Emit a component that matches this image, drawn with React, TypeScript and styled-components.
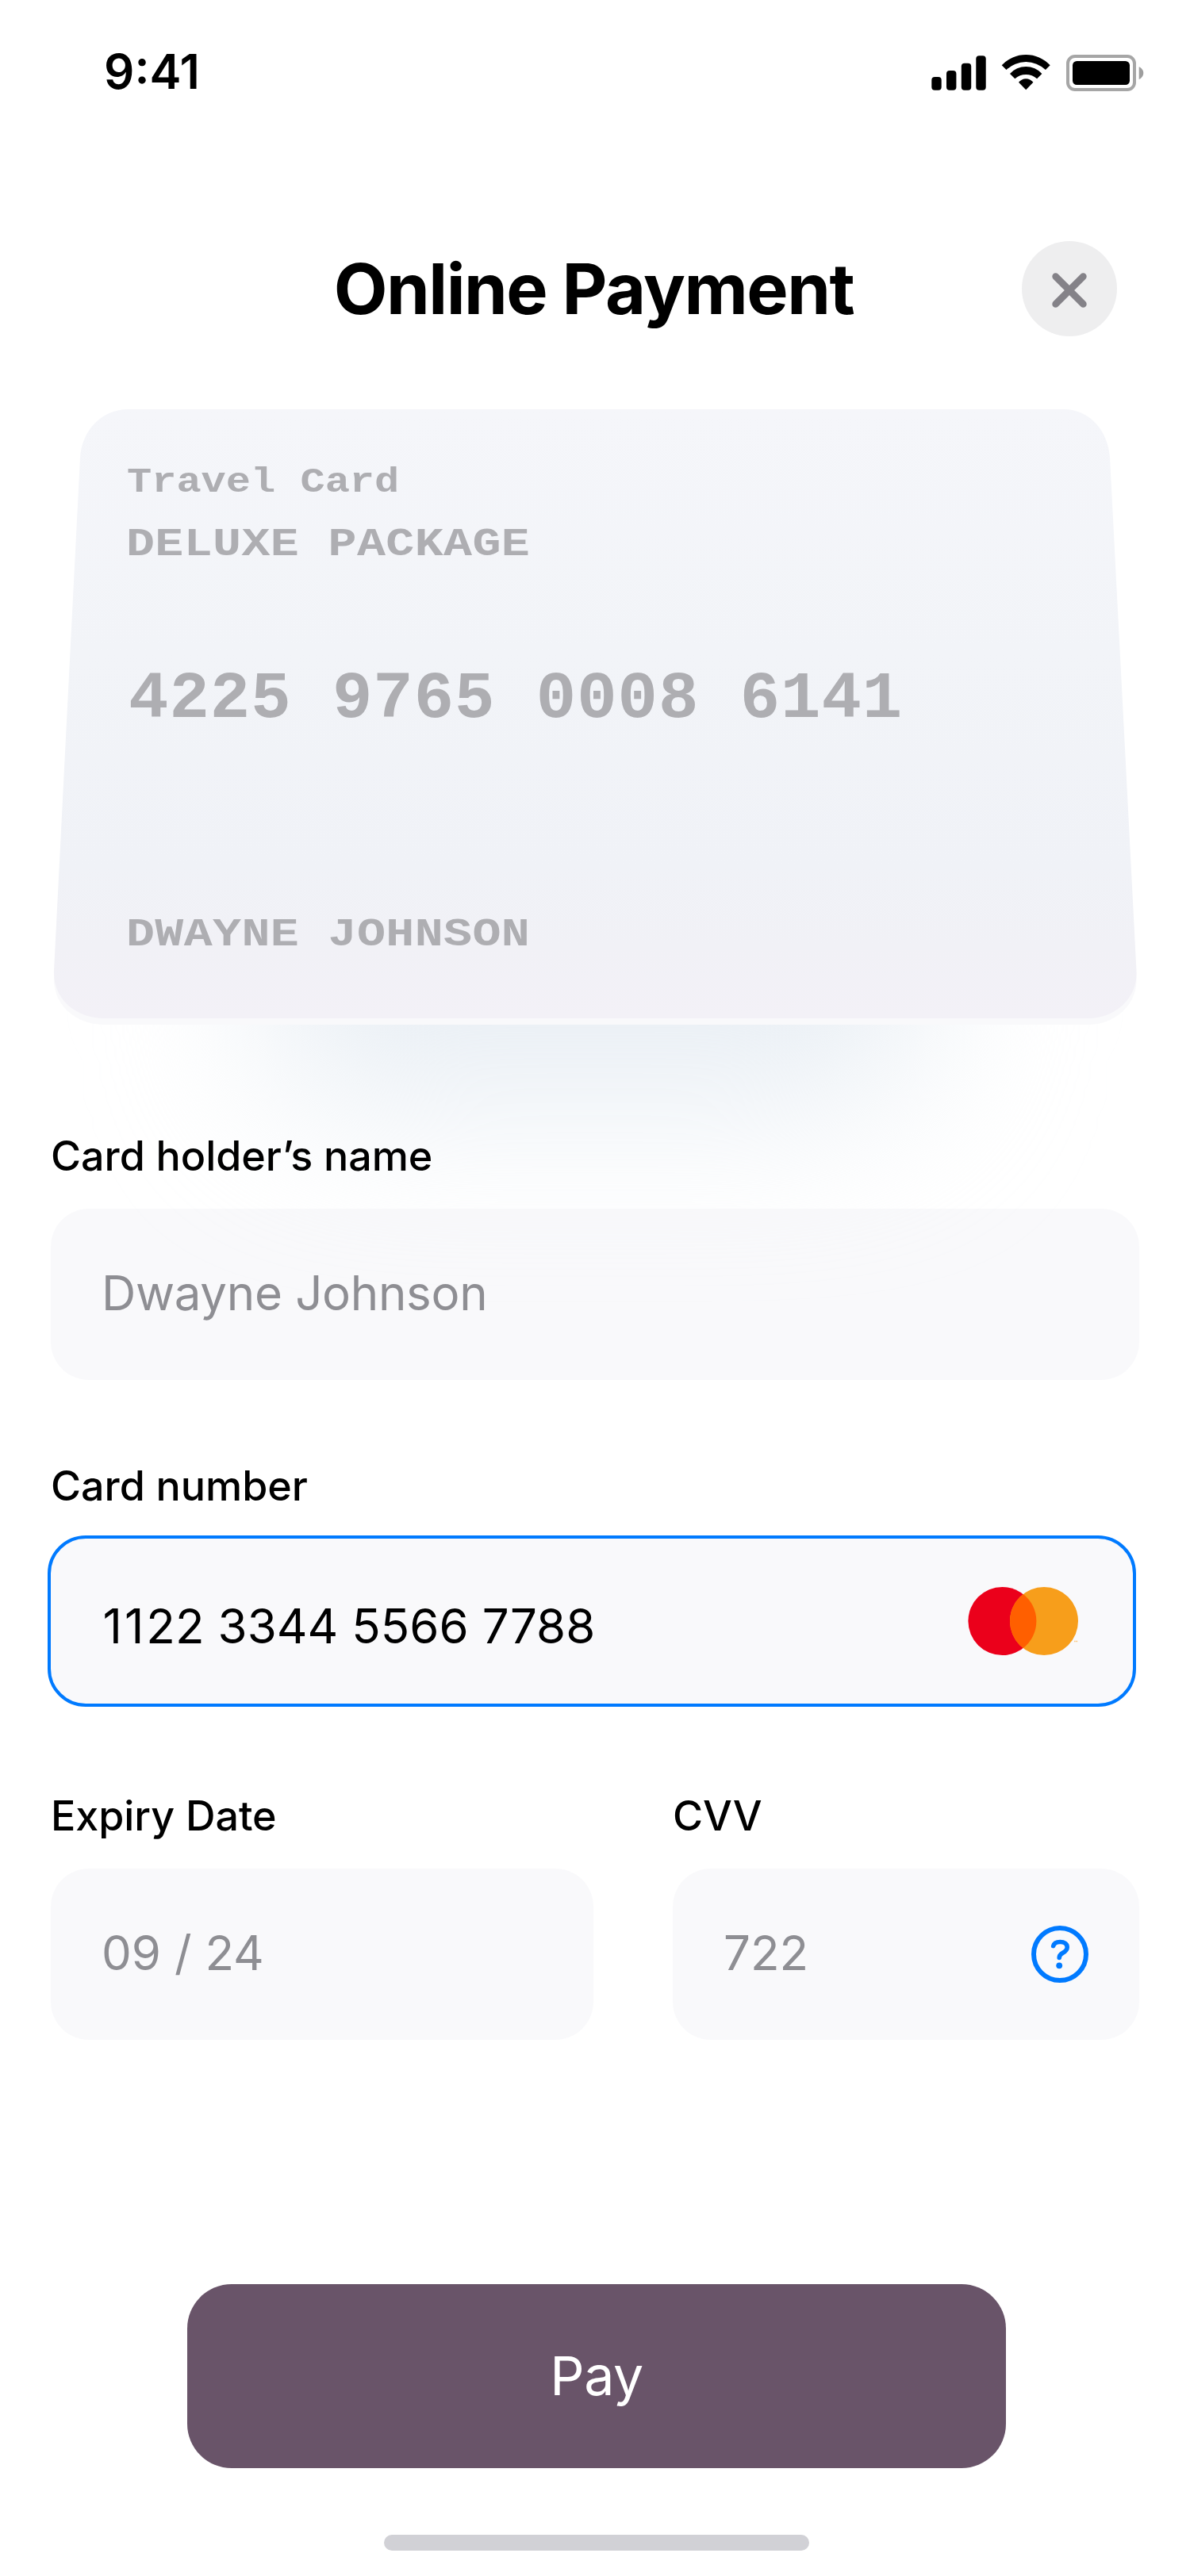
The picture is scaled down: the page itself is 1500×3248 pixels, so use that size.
import React from "react";
import styled, { createGlobalStyle, css } from "styled-components";

const sans = `Inter, "Liberation Sans", sans-serif`;
const mono = `"Liberation Mono", monospace`;

const GlobalStyle = createGlobalStyle`
  *, *::before, *::after { box-sizing: border-box; }
  body { margin: 0; background: #fff; }
`;

const Screen = styled.main`
  position: relative;
  display: flex;
  flex-direction: column;
  width: 1500px;
  height: 3248px;
  overflow: hidden;
  background: #fff;
  color: #000;
  font-family: ${sans};
`;

const StatusBar = styled.div`
  display: flex;
  justify-content: space-between;
  align-items: flex-start;
  height: 176px;
  padding: 54px 58px 0 131px;
`;

const Time = styled.span`
  font-size: 60px;
  line-height: 72px;
  font-weight: 600;
`;

const StatusIcons = styled.div`
  display: flex;
  padding-top: 14px;
  gap: 20px;

  svg {
    display: block;
    overflow: visible;
  }
`;

const Header = styled.header`
  display: grid;
  grid-template-columns: 1fr auto 1fr;
  align-items: center;
  height: 120px;
  margin-top: 128px;
  padding: 0 92px;
`;

const Title = styled.h1`
  grid-column: 2;
  margin: 0;
  padding-right: 3px;
  font-size: 88px;
  line-height: 120px;
  font-weight: 700;
  letter-spacing: -1.5px;
`;

const CloseButton = styled.button`
  justify-self: end;
  display: flex;
  align-items: center;
  justify-content: center;
  width: 120px;
  height: 120px;
  padding: 3px 0 0;
  border: 0;
  border-radius: 50%;
  background: #eeeeef;
`;

const CardStage = styled.section`
  position: relative;
  height: 776px;
  margin: 92px 64px 0;
`;

const CardGlow = styled.div`
  position: absolute;
  left: 270px;
  right: 270px;
  top: 380px;
  bottom: -100px;
  border-radius: 120px;
  background: #e8eef4;
  filter: blur(104px);
`;

const cardOutline =
  "M98 0H1277C1309 0 1333 27 1335 61L1368.5 708C1370.5 741 1343 768 1308 768H67.5C29 768 2.5 741 4 708L37 61C39 27 64 0 98 0Z";

const CardEdge = styled.div`
  position: absolute;
  inset: 8px 0 0;
  background: #f9f9fb;
  clip-path: path("${cardOutline}");
`;

const CardFace = styled.div`
  position: relative;
  display: flex;
  flex-direction: column;
  align-items: flex-start;
  height: 768px;
  padding: 61px 95px 0;
  background: linear-gradient(180deg, #f5f6fa 0%, #f2f4f8 40%, #f0f2f7 75%, #f1f1f6 88%, #f3f1f7 100%);
  clip-path: path("${cardOutline}");
`;

const Embossed = styled.span<{ $size: number; $top: number; $indent?: number; $spacing?: number; $squash: number }>`
  margin-top: ${(p) => p.$top}px;
  margin-left: ${(p) => p.$indent ?? 0}px;
  font-family: ${mono};
  font-size: ${(p) => p.$size}px;
  line-height: 60px;
  font-weight: 700;
  letter-spacing: ${(p) => p.$spacing ?? 0}px;
  white-space: pre;
  color: #aeaeb2;
  transform: scaleY(${(p) => p.$squash});
  transform-origin: 0 75%;
`;

const Form = styled.form`
  position: relative;
  display: flex;
  flex-direction: column;
  gap: 102px;
  margin: 134px 64px 0;
`;

const Row = styled.div`
  display: grid;
  grid-template-columns: 684px 588px;
  gap: 100px;
`;

const Field = styled.div`
  display: flex;
  flex-direction: column;
  gap: 34px;
`;

const Label = styled.label`
  font-size: 52px;
  line-height: 64px;
  font-weight: 500;
  letter-spacing: -0.05px;
`;

const InputBox = styled.div<{ $focused?: boolean }>`
  display: flex;
  align-items: center;
  justify-content: space-between;
  height: 216px;
  padding: 0 64px;
  border-radius: 48px;
  background: rgba(242, 242, 247, 0.46);
  color: #8e8e93;

  ${(p) =>
    p.$focused &&
    css`
      margin: -4px 4px 4px -4px;
      padding-right: 69px;
      border: 4px solid #007aff;
      color: #000;
    `}
`;

const Value = styled.span<{ $shift: number; $spacing?: number }>`
  font-size: 60px;
  line-height: 72px;
  font-weight: 400;
  letter-spacing: ${(p) => p.$spacing ?? 0}px;
  padding-top: ${(p) => Math.max(0, p.$shift * 2)}px;
  padding-bottom: ${(p) => Math.max(0, -p.$shift * 2)}px;
`;

const WideOnes = styled.span`
  margin-left: 1.5px;
  letter-spacing: 3px;
`;

const PayButton = styled.button`
  position: relative;
  align-self: center;
  width: 1032px;
  height: 232px;
  margin: 308px 0 0 4px;
  padding: 0 0 2px;
  border: 0;
  border-radius: 56px;
  background: #695469;
  color: #fff;
  font-family: ${sans};
  font-size: 68px;
  font-weight: 400;
  letter-spacing: -0.5px;
`;

const HomeIndicator = styled.div`
  align-self: center;
  width: 536px;
  height: 20px;
  margin: 84px 0 0 4px;
  border-radius: 10px;
  background: #d1d1d6;
`;

const Signal = () => (
  <svg width="69" height="48" viewBox="-1 0 69 48">
    <rect x="0.3" y="29" width="12.4" height="16.7" rx="4" />
    <rect x="19" y="21" width="12.4" height="24.7" rx="4" />
    <rect x="37.8" y="11.8" width="12.4" height="33.9" rx="4" />
    <rect x="56.3" y="2.3" width="12.4" height="43.4" rx="4" />
  </svg>
);

const Wifi = () => (
  <svg width="62" height="48" viewBox="0 0 62 48">
    <path d="M0.7 14.3A41.6 41.6 0 0 1 61.7 14.3L55.9 20A35.8 35.8 0 0 0 6.5 20Z" />
    <path d="M11 25A27.2 27.2 0 0 1 51.4 25L45.1 31.3A20.9 20.9 0 0 0 17.3 31.3Z" />
    <path d="M22 35.7A11.8 11.8 0 0 1 40.4 35.7L31.2 45.2Z" />
  </svg>
);

const Battery = () => (
  <svg width="98" height="48" viewBox="0 0 98 48">
    <rect x="2" y="3" width="84" height="42" rx="9" fill="none" stroke="#a6a6a6" strokeWidth="4" />
    <rect x="8" y="9" width="72" height="30" rx="5.3" />
    <path d="M91.7 16.2C95 17.6 97.3 20.6 97.3 24C97.3 27.4 95 30.6 91.7 32Z" fill="#9e9e9e" />
  </svg>
);

const Cross = () => (
  <svg width="44" height="44" viewBox="0 0 44 44" fill="none" stroke="#848288" strokeWidth="8.6" strokeLinecap="round">
    <path d="M4.6 4.6L39.4 39.4M39.4 4.6L4.6 39.4" />
  </svg>
);

const Mastercard = () => (
  <svg width="139" height="88" viewBox="0 0 139 88">
    <circle cx="43.4" cy="44" r="43" fill="#eb001b" />
    <circle cx="96" cy="44" r="43" fill="#f79e1b" />
    <path d="M69.7 10A43 43 0 0 1 69.7 78A43 43 0 0 1 69.7 10Z" fill="#ff5f00" />
    <path d="M134 69.5h1.6M136.2 69.5h2" stroke="#f9c880" strokeWidth="1.6" />
  </svg>
);

const Help = () => (
  <svg width="72" height="72" viewBox="0 0 72 72" fill="none" stroke="#007aff" strokeLinecap="round" strokeLinejoin="round">
    <circle cx="36" cy="36" r="33" strokeWidth="6" />
    <path
      d="M27.7 25.6C28.6 22.2 32 20.5 36.2 20.5C41.6 20.5 45.2 23 45.2 27.2C45.2 30.6 43 32.4 39.8 34.2C36.6 36 35.2 37.4 35.2 40.5"
      strokeWidth="5.6"
    />
    <circle cx="35.2" cy="50.3" r="3.9" fill="#007aff" stroke="none" />
  </svg>
);

export default function App() {
  return (
    <>
      <GlobalStyle />
      <Screen>
        <StatusBar>
          <Time>9:41</Time>
          <StatusIcons>
            <Signal />
            <Wifi />
            <Battery />
          </StatusIcons>
        </StatusBar>

        <Header>
          <Title>Online Payment</Title>
          <CloseButton type="button" aria-label="Close">
            <Cross />
          </CloseButton>
        </Header>

        <CardStage>
          <CardGlow />
          <CardEdge />
          <CardFace>
            <Embossed $size={52} $top={0} $indent={1} $squash={0.85}>Travel Card</Embossed>
            <Embossed $size={60} $top={17} $spacing={0.36} $squash={0.84}>DELUXE PACKAGE</Embossed>
            <Embossed $size={84} $top={138} $indent={3} $spacing={0.97} $squash={1}>4225 9765 0008 6141</Embossed>
            <Embossed $size={60} $top={234} $spacing={0.36} $squash={0.84}>DWAYNE JOHNSON</Embossed>
          </CardFace>
        </CardStage>

        <Form>
          <Field>
            <Label>Card holder’s name</Label>
            <InputBox>
              <Value $shift={-2} $spacing={-0.3}>Dwayne Johnson</Value>
            </InputBox>
          </Field>
          <Field>
            <Label>Card number</Label>
            <InputBox $focused>
              <Value $shift={6} $spacing={0.05}>
                <WideOnes>11</WideOnes>22 3344 5566 7788
              </Value>
              <Mastercard />
            </InputBox>
          </Field>
          <Row>
            <Field>
              <Label>Expiry Date</Label>
              <InputBox>
                <Value $shift={-2}>09 / 24</Value>
              </InputBox>
            </Field>
            <Field>
              <Label>CVV</Label>
              <InputBox>
                <Value $shift={-2}>722</Value>
                <Help />
              </InputBox>
            </Field>
          </Row>
        </Form>

        <PayButton type="button">Pay</PayButton>
        <HomeIndicator />
      </Screen>
    </>
  );
}
